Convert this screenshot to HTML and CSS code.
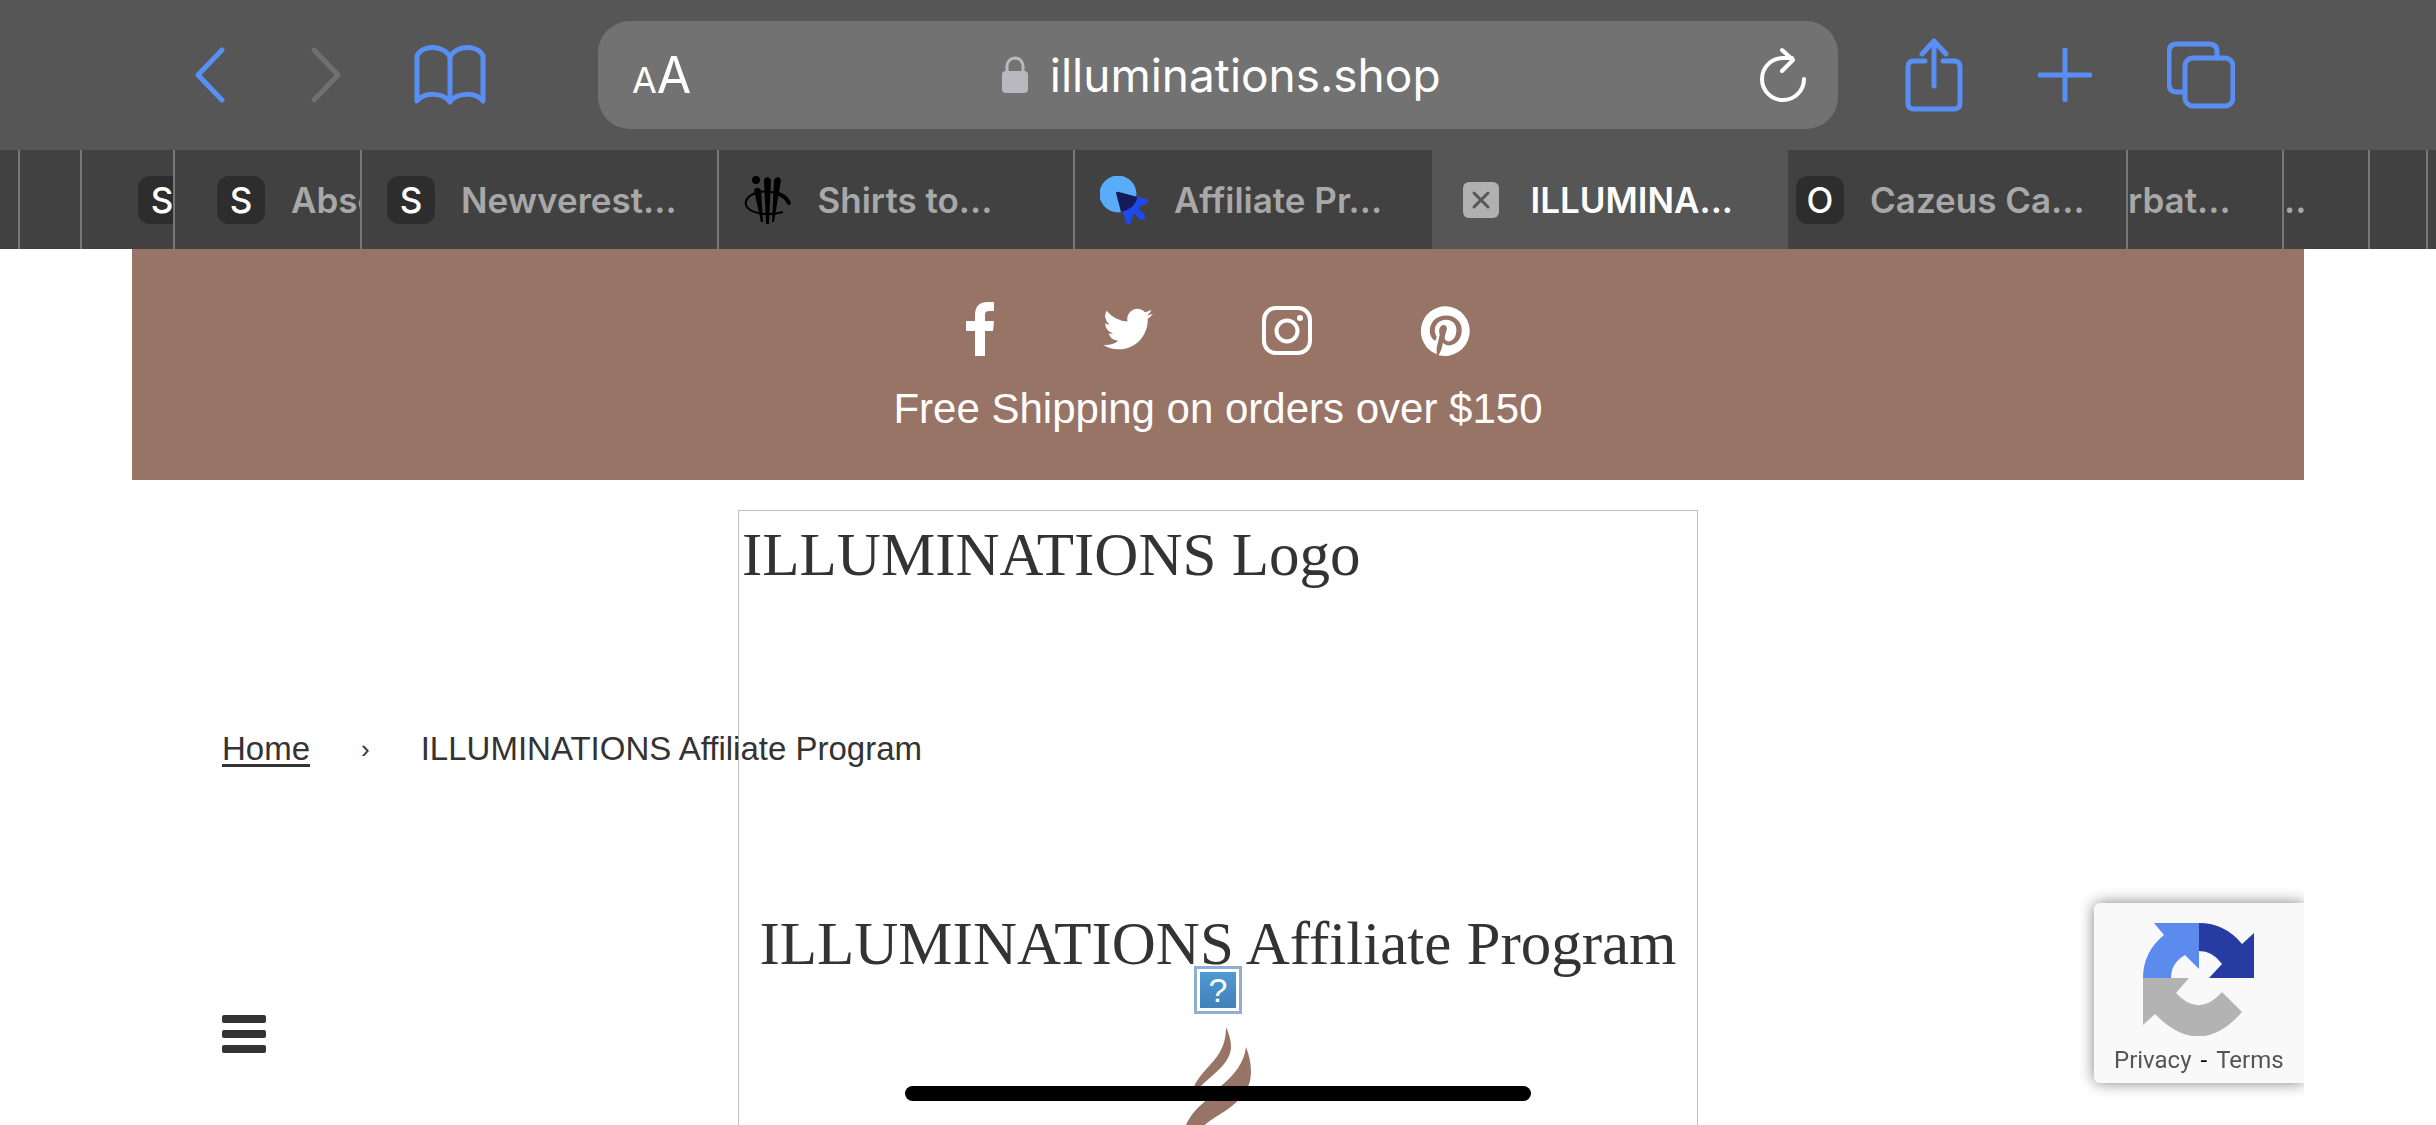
FILE: index.html
```
<!DOCTYPE html>
<html lang="en">
<head>
  <meta charset="UTF-8">
  <meta name="viewport" content="width=device-width, initial-scale=1.0">
  <title>ILLUMINATIONS Affiliate Program</title>
  <link rel="stylesheet" href="styles.css">
</head>
<body>
  <div class="toolbar">
    <div class="tools tools-left">
      <button class="tool" aria-label="Back">
        <svg width="32" height="56" viewBox="0 0 32 56"><path d="M28 3L4 28l24 25"/></svg>
      </button>
      <button class="tool" aria-label="Forward" disabled>
        <svg width="32" height="56" viewBox="0 0 32 56"><path d="M4 3l24 25L4 53"/></svg>
      </button>
      <button class="tool" aria-label="Bookmarks">
        <svg width="72" height="60" viewBox="0 0 72 60"><path d="M36 12C30 0 8-1 3 11v45c7-9 26-9 33 1 7-10 26-10 33-1V11C64-1 42 0 36 12zM36 12v45"/></svg>
      </button>
    </div>
    <div class="address">
      <button class="text-size" aria-label="Text size"><small>A</small>A</button>
      <div class="site">
        <svg width="26" height="38" viewBox="0 0 26 38"><rect y="15" width="26" height="22" rx="4" fill="#b9b8bf"/><path d="M5 17v-7a8 8 0 0 1 16 0v7" fill="none" stroke="#b9b8bf" stroke-width="3"/></svg>
        <span>illuminations.shop</span>
      </div>
      <button class="tool reload" aria-label="Reload">
        <svg width="48" height="56" viewBox="0 0 48 56"><path d="M45 32a21 21 0 1 1-21-21h9M23 3l11 10-11 11"/></svg>
      </button>
    </div>
    <div class="tools tools-right">
      <button class="tool" aria-label="Share">
        <svg width="58" height="74" viewBox="0 0 58 74"><path d="M20 23H9q-6 0-6 6v36q0 6 6 6h40q6 0 6-6V29q0-6-6-6H38M29 48V4M17 16L29 3l12 13"/></svg>
      </button>
      <button class="tool" aria-label="New tab">
        <svg width="54" height="54" viewBox="0 0 54 54"><path d="M27 2v50M2 27h50"/></svg>
      </button>
      <button class="tool" aria-label="Show tabs">
        <svg width="68" height="68" viewBox="0 0 68 68"><rect x="18" y="17" width="48" height="48" rx="8"/><path d="M18 51h-8q-8 0-8-8V11q0-8 8-8h32q8 0 8 8v6"/></svg>
      </button>
    </div>
  </div>

  <nav class="tabs" aria-label="Open tabs">
    <div class="tab edge-1"></div>
    <div class="tab edge-2"></div>
    <div class="tab edge-3"><span class="letter">S</span></div>
    <div class="tab edge-4"><span class="letter">S</span><span>Abso</span></div>
    <div class="tab"><span class="letter">S</span><span>Newverest...</span></div>
    <div class="tab">
      <svg width="48" height="48" viewBox="0 0 48 48"><g fill="#000"><circle cx="12" cy="4" r="4"/><path d="M10 14q3-5 7 0l2 32h-2zM20 4q3-6 7 0l-2 44h-3zM30 4q4-6 7 0l-7 42h-2z"/></g><path d="M43 26C40 18 27 14 15 16 5 18-1 25 3 31c5 7 22 9 36 5" fill="none" stroke="#000" stroke-width="2"/><path d="M32 17c7 2 11 5 13 10" fill="none" stroke="#000" stroke-width="4" stroke-linecap="round"/></svg>
      <span>Shirts to...</span>
    </div>
    <div class="tab">
      <svg width="48" height="48" viewBox="0 0 48 48"><circle cx="18" cy="18" r="18.500" fill="#58acf8"/><path d="M17 16l30 7q2 2 0 4l-9 5 7 7q1 6-5 5l-6-7-4 11q-3 1-4-1z" fill="#2049ea"/><path d="M16 17q0-2 3-1l18 5q-1 11-16 15z" fill="#141b57"/></svg>
      <span>Affiliate Pr...</span>
    </div>
    <div class="tab active">
      <button class="close" aria-label="Close tab">
        <svg width="36" height="36" viewBox="0 0 36 36"><rect width="36" height="36" rx="6" fill="#b0b0b0"/><path d="M11 11l14 14M25 11L11 25" stroke="#565656" stroke-width="3" stroke-linecap="round"/></svg>
      </button>
      <span>ILLUMINA...</span>
    </div>
    <div class="tab edge-5"><span class="letter">O</span><span>Cazeus Ca...</span></div>
    <div class="tab edge-6"><span>rbat...</span></div>
    <div class="tab edge-7"><span>..</span></div>
    <div class="tab edge-8"></div>
    <div class="tab edge-9"></div>
  </nav>

  <div class="page">
    <div class="announcement">
      <div class="social">
        <a href="#" aria-label="Facebook"><svg width="28" height="54" viewBox="11 0 28 54"><path d="M20 54V29h-9V19h9v-6Q20 0 33 0h6v9h-5q-4 0-4 4v6h9l-1 10h-8v25z"/></svg></a>
        <a href="#" aria-label="Twitter"><svg width="50" height="54" viewBox="0 0 24 26"><path d="M24 5.600a10 10 0 0 1-2.800.8 5 5 0 0 0 2.100-2.700 10 10 0 0 1-3.100 1.200 4.900 4.900 0 0 0-8.400 4.500A14 14 0 0 1 1.700 4.200a4.900 4.900 0 0 0 1.500 6.600 5 5 0 0 1-2.200-.6 4.900 4.900 0 0 0 3.900 4.900 5 5 0 0 1-2.200.1 4.900 4.900 0 0 0 4.600 3.400A9.900 9.900 0 0 1 0 20.600a14 14 0 0 0 7.500 2.200c9.200 0 14.300-7.800 14-14.700A10 10 0 0 0 24 5.600z"/></svg></a>
        <a href="#" aria-label="Instagram"><svg width="50" height="54" viewBox="0 0 50 54"><rect x="2" y="6" width="46" height="45" rx="12" fill="none" stroke="#fff" stroke-width="4"/><circle cx="25" cy="29" r="10.500" fill="none" stroke="#fff" stroke-width="4"/><circle cx="38" cy="16" r="3"/></svg></a>
        <a href="#" aria-label="Pinterest"><svg width="50" height="54" viewBox="0 0 24 26"><path d="M12 2a12 12 0 0 0-4.400 23.200c-.1-1-.2-2.400 0-3.500l1.400-6s-.3-.7-.3-1.700c0-1.700 1-2.900 2.200-2.900 1 0 1.500.8 1.500 1.700 0 1-.7 2.600-1 4-.3 1.200.6 2.200 1.800 2.200 2.100 0 3.800-2.200 3.800-5.500 0-2.900-2.100-4.900-5-4.900-3.400 0-5.400 2.600-5.400 5.200 0 1 .4 2.100.9 2.700v.4l-.4 1.400q-.1.400-.5.200c-1.500-.7-2.400-2.900-2.400-4.700C4.200 10 6.900 6.500 12.200 6.500c4.200 0 7.400 3 7.400 6.900 0 4.100-2.600 7.500-6.200 7.500-1.200 0-2.400-.6-2.800-1.400l-.7 2.900c-.3 1.100-1 2.400-1.500 3.200A12 12 0 1 0 12 2z"/></svg></a>
      </div>
      <p>Free Shipping on orders over $150</p>
    </div>

    <main>
      <div class="logo">
        <span>ILLUMINATIONS Logo</span>
        <div class="logo-mark">
          <div class="missing">?</div>
          <svg width="65" height="98" viewBox="84 202 195 294"><g fill="#987466"><path d="M204 202C212 220 219 240 219 262 217 310 170 340 130 378L106 402V384C125 342 165 312 184 280 198 256 204 232 204 202z"/><path d="M264 262C276 290 281 325 278 350 275 395 240 427 205 452 180 468 160 480 140 496H84C95 470 115 446 143 423L190 378C230 345 258 310 264 262z"/></g></svg>
        </div>
      </div>
      <nav class="breadcrumb" aria-label="Breadcrumb">
        <a href="#">Home</a>
        <span class="sep">›</span>
        <span>ILLUMINATIONS Affiliate Program</span>
      </nav>
      <h1>ILLUMINATIONS Affiliate Program</h1>
      <button class="menu" aria-label="Menu"><i></i><i></i><i></i></button>
    </main>
  </div>

  <div class="captcha">
    <svg width="112" height="114" viewBox="0 0 112 114">
      <path d="M0 56h46L33 71q23 25 46-1l20 20q-42 48-87 2L0 103z" fill="#b3b3b3"/>
      <path d="M0 56Q0 30 21 13L11 1h45v46L42 33Q28 41 28 56z" fill="#5c8bee"/>
      <path d="M56 1q26 0 43 21l12-11v45H66l13-14Q70 29 56 29z" fill="#263ca3"/>
    </svg>
    <p><a href="#">Privacy</a> - <a href="#">Terms</a></p>
  </div>
  <div class="home-bar"></div>
</body>
</html>
```
FILE: styles.css
```
* {
  box-sizing: border-box;
}
body {
  display: flex;
  flex-direction: column;
  margin: 0;
  height: 100vh;
  overflow: hidden;
  background: #fff;
  color: #333;
  font-family: "Liberation Sans", Arial, sans-serif;
}
button {
  padding: 0;
  border: none;
  background: none;
  color: inherit;
}
svg {
  display: block;
  flex: none;
}

/* browser toolbar */
.toolbar {
  display: flex;
  flex: none;
  align-items: center;
  height: 150px;
  padding: 0 200px 0 194px;
  background: #565656;
  font-family: Inter, sans-serif;
}
.tools {
  display: flex;
  align-items: center;
}
.tools-left {
  width: 404px;
}
.tools-left .tool {
  margin-right: 72px;
}
.tools-left .tool:first-child {
  margin-right: 84px;
}
.tools-right {
  width: 398px;
  gap: 75px;
  padding-left: 67px;
}
.tool svg {
  fill: none;
  stroke: #598ff5;
  stroke-width: 5;
  stroke-linecap: round;
  stroke-linejoin: round;
}
.tool:disabled svg {
  stroke: #707070;
}
.address {
  display: flex;
  flex: 1;
  align-items: center;
  justify-content: space-between;
  height: 108px;
  padding: 0 31px 0 34px;
  border-radius: 32px;
  background: #727272;
  color: #fff;
}
.text-size {
  font-family: Inter, sans-serif;
  font-size: 50px;
}
.text-size small {
  font-size: 36px;
}
.site {
  display: flex;
  align-items: center;
  gap: 22px;
  padding-right: 8px;
  font-size: 46px;
}
.reload svg {
  stroke: #fff;
  stroke-width: 4;
}

/* tab strip */
.tabs {
  display: flex;
  flex: none;
  height: 99px;
  background: #414141;
  color: #a8a8a8;
  font-family: Inter, sans-serif;
  font-size: 35px;
  font-weight: 600;
}
.tab {
  display: flex;
  flex: 1;
  align-items: center;
  gap: 26px;
  padding-left: 25px;
  overflow: hidden;
  border-right: 2px solid #777;
  white-space: nowrap;
}
.letter {
  flex: none;
  width: 48px;
  border-radius: 12px;
  background: #2d2d2d;
  color: #fff;
  font-weight: 500;
  line-height: 48px;
  text-align: center;
}
.active {
  border-color: #565656;
  background: #565656;
  color: #fff;
}
.tab:has(+ .active) {
  border-color: #414141;
}
.close {
  padding: 0 6px;
}
.edge-1, .edge-2, .edge-3, .edge-4, .edge-5, .edge-6, .edge-7, .edge-8, .edge-9 {
  flex: none;
  padding-left: 0;
}
.edge-1 {
  width: 20px;
}
.edge-2 {
  width: 62px;
}
.edge-3 {
  width: 93px;
  padding-left: 56px;
}
.edge-4 {
  width: 187px;
  padding-left: 42px;
}
.edge-5 {
  width: 340px;
  padding-left: 8px;
}
.edge-6 {
  width: 156px;
}
.edge-7 {
  width: 86px;
}
.edge-8 {
  width: 58px;
}
.edge-9 {
  width: 8px;
  border: none;
}

/* shop page */
.page {
  display: flex;
  flex: 1;
  flex-direction: column;
  min-height: 0;
  padding: 0 132px;
}
.announcement {
  flex: none;
  padding: 53px 0 46px;
  background: #987466;
  color: #fff;
  text-align: center;
}
.social {
  display: flex;
  justify-content: center;
  gap: 109px;
}
.social svg {
  fill: #fff;
}
.announcement p {
  margin: 28px 0 0;
  font-size: 42px;
  line-height: 50px;
}
main {
  position: relative;
  flex: 1;
  min-height: 0;
  padding: 247px 90px 0;
}
/* the logo frame hangs behind the breadcrumb and title */
.logo {
  position: absolute;
  top: 30px;
  bottom: 0;
  left: 50%;
  width: 960px;
  margin-left: -480px;
  padding: 6px 3px;
  border: 1px solid #c0c0c0;
  border-bottom: none;
  font-family: "Liberation Serif", serif;
  font-size: 61px;
  line-height: 76px;
}
.logo-mark {
  position: absolute;
  top: 455px;
  left: 0;
  right: 0;
  display: flex;
  flex-direction: column;
  align-items: center;
  gap: 13px;
}
.missing {
  width: 48px;
  height: 48px;
  border: 3px solid #91add3;
  outline: 3px solid #fff;
  outline-offset: -6px;
  background: linear-gradient(#529bd2, #407fb9);
  color: #fff;
  font-family: "Liberation Sans", Arial, sans-serif;
  font-size: 34px;
  line-height: 42px;
  text-align: center;
}
.breadcrumb {
  position: relative;
  display: flex;
  align-items: center;
  gap: 51px;
  font-size: 33px;
  line-height: 44px;
}
.breadcrumb a {
  color: inherit;
  text-underline-offset: 4px;
}
.sep {
  font-size: 26px;
}
h1 {
  position: relative;
  margin: 135px 0 0;
  font-family: "Liberation Serif", serif;
  font-size: 61px;
  font-weight: normal;
  line-height: 76px;
  text-align: center;
}
.menu {
  display: flex;
  flex-direction: column;
  gap: 7px;
  width: 44px;
  margin-top: 33px;
}
.menu i {
  width: 44px;
  height: 8px;
  border-radius: 2px;
  background: #333;
}

.captcha {
  position: fixed;
  right: 132px;
  bottom: 42px;
  width: 210px;
  height: 180px;
  padding: 19px 0 0 20px;
  border-radius: 6px 0 0 6px;
  background: #f9f9f9;
  box-shadow: 0 0 15px #808080;
  clip-path: inset(-30px 0 -30px -30px);
  color: #000;
  font-family: Roboto, sans-serif;
  font-size: 24px;
}
.captcha svg {
  margin-left: 29px;
}
.captcha p {
  display: flex;
  gap: 9px;
  margin: 10px 0 0;
  line-height: 28px;
}
.captcha a {
  color: #555;
  text-decoration: none;
}
.home-bar {
  position: fixed;
  bottom: 24px;
  left: 50%;
  width: 626px;
  height: 15px;
  margin-left: -313px;
  border-radius: 8px;
  background: #000;
}
```
